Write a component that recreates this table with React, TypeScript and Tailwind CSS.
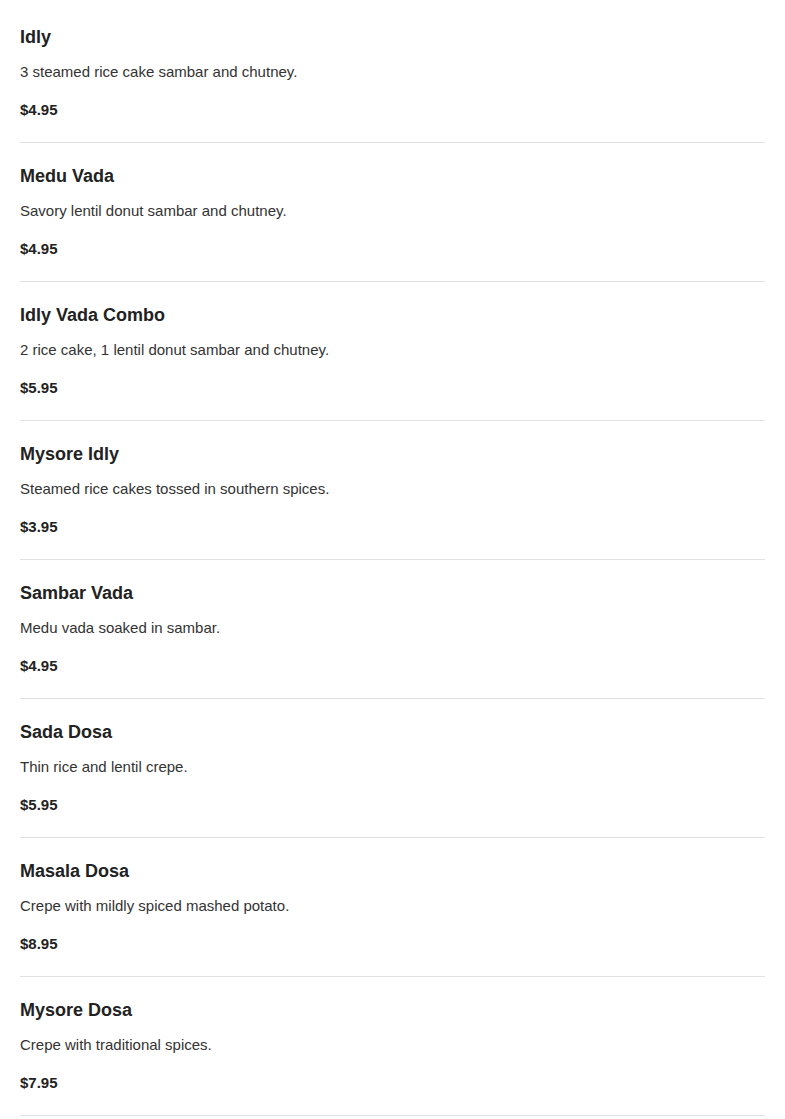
import React from 'react'

const items = [
  { name: 'Idly', desc: '3 steamed rice cake sambar and chutney.', price: '$4.95' },
  { name: 'Medu Vada', desc: 'Savory lentil donut sambar and chutney.', price: '$4.95' },
  { name: 'Idly Vada Combo', desc: '2 rice cake, 1 lentil donut sambar and chutney.', price: '$5.95' },
  { name: 'Mysore Idly', desc: 'Steamed rice cakes tossed in southern spices.', price: '$3.95' },
  { name: 'Sambar Vada', desc: 'Medu vada soaked in sambar.', price: '$4.95' },
  { name: 'Sada Dosa', desc: 'Thin rice and lentil crepe.', price: '$5.95' },
  { name: 'Masala Dosa', desc: 'Crepe with mildly spiced mashed potato.', price: '$8.95' },
  { name: 'Mysore Dosa', desc: 'Crepe with traditional spices.', price: '$7.95' },
]

export default function App() {
  return (
    <div className="min-h-screen bg-white px-5 pt-1 font-['Liberation_Sans',Arial,sans-serif] text-[#222]">
      {items.map((item) => (
        <div key={item.name} className="border-b border-[#e2e2e2] pt-[21px] pb-[21px]">
          <h3 className="text-[18px] font-bold leading-[24px] text-[#222]">{item.name}</h3>
          <p className="mt-[12px] text-[15px] leading-[22px] text-[#333]">{item.desc}</p>
          <p className="mt-4 text-[15px] font-bold leading-[22px] text-[#222]">{item.price}</p>
        </div>
      ))}
    </div>
  )
}
